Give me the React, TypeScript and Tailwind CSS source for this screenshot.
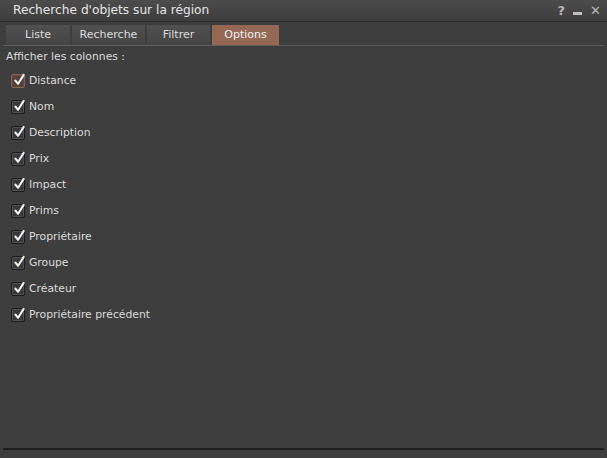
import React from "react";

const cols = [
  "Distance",
  "Nom",
  "Description",
  "Prix",
  "Impact",
  "Prims",
  "Propriétaire",
  "Groupe",
  "Créateur",
  "Propriétaire précédent",
];

function Check({ focus }: { focus?: boolean }) {
  return (
    <div
      className={
        "relative w-[14px] h-[14px] rounded-[2px] border " +
        (focus
          ? "border-[#8a6450] bg-[#4d433c] shadow-[inset_0_0_0_1px_#5e4a3e]"
          : "border-[#1c1c1c] bg-[#383838] shadow-[inset_0_0_0_1px_#525252]")
      }
    >
      <svg viewBox="0 0 14 14" className="absolute left-[1px] top-[-2px] w-[13px] h-[14px]">
        <path d="M2.5 7.5 L5.5 11 L11.5 1.5" fill="none" stroke="#f2f2f2" strokeWidth="2.2" strokeLinecap="round" strokeLinejoin="round" />
      </svg>
    </div>
  );
}

export default function App() {
  const tabs = ["Liste", "Recherche", "Filtrer", "Options"];
  const widths = ["w-[64px]", "w-[73px]", "w-[63px]", "w-[67px]"];
  return (
    <div
      className="w-[607px] h-[458px] bg-[#3e3e3e] flex flex-col text-[#dcdcdc] overflow-hidden"
      style={{ fontFamily: '"DejaVu Sans", sans-serif' }}
    >
      <div className="h-[22px] flex items-center justify-between bg-gradient-to-b from-[#4c4c4c] to-[#3e3e3e] border-b border-[#2e2e2e] pl-[13px] pr-[6px]">
        <span className="text-[12.2px] text-[#e6e6e6]">Recherche d'objets sur la région</span>
        <div className="flex items-center gap-[8px] text-[#b8b8b8]">
          <span className="text-[13px] font-bold">?</span>
          <span className="w-[9px] h-[3px] bg-[#c0c0c0] mt-[5px]"></span>
          <span className="text-[13px]">✕</span>
        </div>
      </div>
      <div className="flex gap-[2px] pt-[3px] h-[24px] border-b border-[#5e5e5e] mx-[3px] pl-[3px]">
        {tabs.map((t, i) => (
          <div
            key={t}
            className={
              widths[i] +
              " flex items-center justify-center text-[11px] " +
              (t === "Options"
                ? "bg-[#946854] text-[#f2f2f2]"
                : "bg-gradient-to-b from-[#505050] to-[#454545] text-[#dcdcdc]")
            }
          >
            {t}
          </div>
        ))}
      </div>
      <div className="pl-[6px] pt-[3px] text-[10.8px] h-[22px]">Afficher les colonnes :</div>
      <div className="flex flex-col pl-[11px]">
        {cols.map((c, i) => (
          <div key={c} className="h-[26px] flex items-center gap-[4px]">
            <Check focus={i === 0} />
            <span className="text-[10.8px]">{c}</span>
          </div>
        ))}
      </div>
      <div className="flex-1"></div>
      <div className="mx-[3px] h-[2px] bg-[#1e1e1e] mb-[8px]"></div>
    </div>
  );
}
